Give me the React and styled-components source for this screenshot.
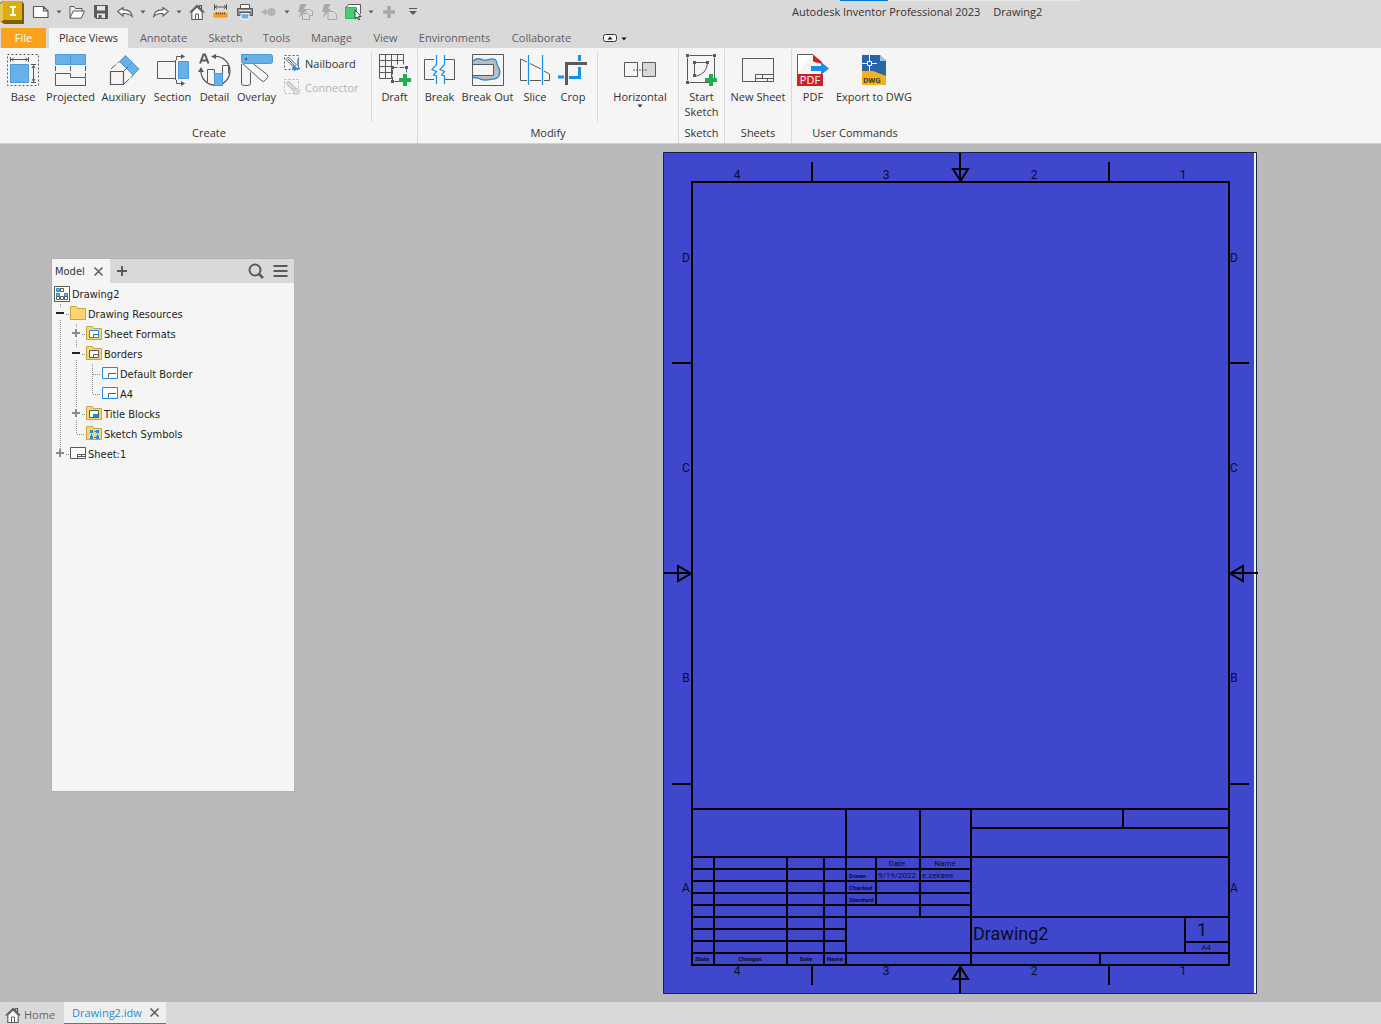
import React, { useState } from "react";
import styled, { createGlobalStyle, css } from "styled-components";

const ui = `"Open Sans", "Noto Sans", sans-serif`;
const treeFont = `"DejaVu Sans Condensed", "DejaVu Sans", sans-serif`;
const cadFont = `"Roboto", "Liberation Sans", sans-serif`;
const ink = "#5a5a5a";
const sky = "#68b0e6";
const azure = "#1a8fe3";

const GlobalStyle = createGlobalStyle`
  * { box-sizing: border-box; }
  body { margin: 0; background: #bababa; font-family: ${ui}; font-size: 11px; color: #333; }
  button { font: inherit; color: inherit; border: 0; padding: 0; margin: 0; background: none; cursor: default; }
  svg { display: block; flex: none; }
`;

const Shell = styled.div`
  display: flex;
  flex-direction: column;
  min-height: 100vh;
`;

/* ---------- title bar ---------- */
const TitleBar = styled.header`
  position: relative;
  display: flex;
  align-items: center;
  height: 28px;
  padding-bottom: 5px;
  background: #d9d9d9;
  white-space: nowrap;
`;
const EdgeMark = styled.span`
  position: absolute;
  top: 0;
  left: 840px;
  width: 240px;
  height: 1px;
  background: linear-gradient(to right, #0078d7 48px, #e6e6e6 48px);
`;
const Logo = styled.div`
  width: 29px;
`;
const QuickButton = styled.button`
  display: flex;
  align-items: center;
  justify-content: center;
  width: ${(p) => (p.$narrow ? 12 : 24)}px;
  height: 22px;
`;
const TitleText = styled.h1`
  display: flex;
  gap: 13px;
  margin: 0 0 0 367px;
  font-size: 11px;
  font-weight: 400;
  line-height: 16px;
`;

/* ---------- tabs ---------- */
const TabBar = styled.nav`
  display: flex;
  height: 20px;
  padding-left: 1px;
  background: #d9d9d9;
`;
const Tab = styled.button`
  width: ${(p) => p.$w}px;
  height: 20px;
  line-height: 20px;
  white-space: nowrap;
  text-align: center;
  && { color: #5f5f5f; }
  ${(p) => p.$kind === "file" && css`&& { background: #faa21b; color: #fff; margin-right: 3px; }`}
  ${(p) => p.$kind === "active" && css`&& { background: #f5f5f5; color: #333; margin-right: 1px; }`}
`;
const RibbonToggle = styled.button`
  display: flex;
  align-items: center;
  && { margin-left: 20px; }
`;

/* ---------- ribbon ---------- */
const Ribbon = styled.div`
  display: flex;
  height: 96px;
  padding-left: 1px;
  background: #f5f5f5;
  border-top: 1px solid #f5f5f5;
  border-bottom: 1px solid #d0d0d0;
`;
const Group = styled.section`
  display: flex;
  flex-direction: column;
  width: ${(p) => p.$w}px;
  border-right: ${(p) => (p.$last ? 0 : 1)}px solid #d9d9d9;
`;
const GroupTools = styled.div`
  display: flex;
  flex: 1;
`;
const GroupName = styled.h2`
  margin: 0;
  height: 20px;
  font-size: 11px;
  font-weight: 400;
  line-height: 20px;
  text-align: center;
  white-space: nowrap;
`;
const Tool = styled.button`
  display: flex;
  flex-direction: column;
  align-items: center;
  width: ${(p) => p.$w}px;
  height: 72px;
  && { padding-top: 5px; }
`;
const ToolLabel = styled.span`
  margin-top: 3px;
  line-height: 15px;
  text-align: center;
  white-space: pre;
`;
const ToolStack = styled.div`
  display: flex;
  flex-direction: column;
  width: 93px;
  padding-left: 6px;
  padding-top: 2px;
`;
const SmallTool = styled.button`
  display: flex;
  align-items: center;
  gap: 5px;
  height: 24px;
  &:disabled { color: #b4b4b4; }
`;
const Divider = styled.span`
  width: 1px;
  height: 71px;
  margin: 2px ${(p) => p.$gap}px 0;
  background: #d9d9d9;
`;

/* ---------- workspace ---------- */
const Workspace = styled.main`
  position: relative;
  display: flex;
  flex: 1;
  align-items: flex-start;
  justify-content: flex-end;
  padding: 8px 123px 8px 0;
  background: #bababa;
`;
const ModelPanel = styled.aside`
  position: absolute;
  left: 52px;
  top: 115px;
  width: 242px;
  height: 532px;
  background: #f5f5f5;
  box-shadow: 0 0 0 1px #b2b2b2;
  font-family: ${treeFont};
  font-size: 11px;
  color: #1e1e1e;
`;
const PanelHead = styled.div`
  display: flex;
  align-items: center;
  height: 24px;
  padding-right: 6px;
  background: #d9d9d9;
`;
const PanelTab = styled.div`
  display: flex;
  align-items: center;
  justify-content: space-between;
  width: 58px;
  height: 24px;
  padding: 0 7px 0 3px;
  background: #f5f5f5;
  color: #33334d;
`;
const PanelActions = styled.div`
  display: flex;
  gap: 9px;
  margin-left: auto;
`;
const PanelButton = styled.button`
  display: flex;
  ${(p) => p.$indent && css`&& { margin-left: 6px; }`}
`;
const Tree = styled.ul`
  list-style: none;
  margin: 0;
  padding: 1px 0 0;
`;
const TreeRow = styled.li`
  display: flex;
  align-items: center;
  height: 20px;
  white-space: nowrap;
`;
const TreeItem = styled.button`
  display: flex;
  align-items: center;
  gap: 2px;
  && { margin-left: 2px; }
`;
const Guide = styled.svg`
  overflow: visible;
`;
const Sheet = styled.svg`
  overflow: visible;
  font-family: ${cadFont};
`;

/* ---------- document tabs ---------- */
const DocBar = styled.footer`
  display: flex;
  height: 22px;
  background: #d9d9d9;
`;
const HomeButton = styled.button`
  display: flex;
  align-items: center;
  gap: 3px;
  width: 64px;
  height: 22px;
  && { padding: 3px 0 0 5px; color: #666; }
`;
const DocTab = styled.div`
  display: flex;
  align-items: center;
  justify-content: space-between;
  width: 102px;
  padding: 0 7px 0 8px;
  background: #efefef;
  border-bottom: 1px solid #1a8fd0;
  color: #1a8fd0;
`;

/* ---------- quick access icons ---------- */
const Svg = ({ w = 16, h = 16, children }) => (
  <svg width={w} height={h} viewBox={`0 0 ${w} ${h}`} fill="none" stroke={ink} overflow="visible" aria-hidden="true">
    {children}
  </svg>
);
const Caret = ({ color = ink }) => (
  <Svg w={6} h={4}><path d="M0.500 0.500h5l-2.500 3z" fill={color} stroke="none" /></Svg>
);
const AppLogo = () => (
  <Svg w={24} h={24}>
    <path d="M0 3L3 1h19l2 3v20H4L0 21z" fill="#7b5f00" stroke="none" />
    <path d="M0 4L4 1v19l-4 2z" fill="#e8c65a" stroke="none" />
    <path d="M3 1h19v19H3z" fill="#dcae0b" stroke="none" />
    <path d="M10 7h6M10 15h6M13 6v10" stroke="#fff" strokeWidth="2" />
  </Svg>
);
const HomeIcon = () => (
  <Svg>
    <path d="M0.800 8.500L8 1.300L15.200 8.500M12.500 5.500V1.500h-2V3.500" strokeWidth="1.200" />
    <path d="M2.800 8V15.500h10.400V8L8 2.800z" fill="#fff" strokeWidth="1.100" />
    <path d="M6.500 15V10h3v5" fill="#fff" />
  </Svg>
);
const Arrow = ({ flip }) => (
  <Svg>
    <path
      transform={flip ? "translate(16 0) scale(-1 1)" : undefined}
      d="M0.700 7.500L6 3.500V6C11 5.500 14.500 8 15.300 12.500C12.500 9.800 10 9.300 6 9.500V12z"
      fill="#fff" strokeWidth="1.100"
    />
  </Svg>
);
const BoltIcon = ({ two }) => (
  <Svg>
    <path d="M3.500 0h6L7 5h3L1.500 14L4 8H1z" fill="#a8a8a8" stroke="none" />
    {two && <path d="M8.500 5.500h5l2 2v4h-7z" fill="#d9d9d9" stroke="#a8a8a8" />}
    <path d={two ? "M5.500 9.500h5l2 2v4h-7z" : "M7 7.500h5.500l3 3v5H7z"} fill="#d9d9d9" stroke="#a8a8a8" />
  </Svg>
);
const quick = {
  new: <Svg w={18}><path d="M1.500 2.500h10l4.500 4.500v6.500h-14.500zM11.500 2.500V7H16" fill="#fff" strokeWidth="1.200" /></Svg>,
  open: <Svg><path d="M1 14V2.500h4l1.500 2H13V7" fill="#efefef" /><path d="M1 14.200L4.200 7h11.300l-3.200 7.200z" fill="#fff" /></Svg>,
  save: (
    <Svg w={14} h={14}>
      <path d="M0.500 0.500h13v13H2L0.500 12z" fill="#5a5a5a" />
      <path d="M3 1h8v4.500h-8z" fill="#e4e4e4" stroke="none" />
      <path d="M3 8.500h8V13H3z" fill="#e4e4e4" stroke="none" />
      <path d="M4.500 10h3v3h-3z" fill={ink} stroke="none" />
    </Svg>
  ),
  undo: <Arrow />,
  redo: <Arrow flip />,
  home: <HomeIcon />,
  measure: (
    <Svg>
      <path d="M1.500 0v6M13.500 0v6M2 3h11" /><path d="M4 1.200L2 3l2 1.800M11 1.200L13 3l-2 1.800" />
      <path d="M1 9h13v4h-13z" fill="#f9a11b" stroke="#ee9512" />
      <path d="M3.500 8.500v2M5.500 8.500v2M7.500 8.500v2M9.500 8.500v2M11.500 8.500v2" stroke="#7a4b00" />
    </Svg>
  ),
  print: (
    <Svg>
      <path d="M3.500 0.500h9v5h-9z" fill="#fff" />
      <path d="M0.500 4.500h15v7H0.500z" fill="#8b8b8b" />
      <path d="M2 6.500h12" stroke="#e4e4e4" />
      <path d="M4 9.500h8v5.500h-8z" fill={sky} stroke="#fff" /><path d="M3 8.500h10" />
    </Svg>
  ),
  back: <Svg><path d="M0 8l5-3.500V7h4v2.500H5v2z" fill="#b4b4b4" stroke="none" /><circle cx="10.500" cy="8" r="4" fill="#b4b4b4" stroke="none" /></Svg>,
  boltTwo: <BoltIcon two />,
  bolt: <BoltIcon />,
  cube: (
    <Svg w={16} h={16}>
      <path d="M0.500 3.500L4 0.500h11.500v9L12 13.500z" fill="#fff" />
      <path d="M0.500 3.500h11v11h-11z" fill="#4fc878" stroke="#3fae64" />
      <path d="M10 6v8.500l2-1.500l1.500 3l1.200-.600L13.300 12.500H16z" fill="#fff" strokeWidth="0.900" stroke="#333" />
    </Svg>
  ),
  plus: <Svg><path d="M8 2v12M2 8h12" stroke="#a8a8a8" strokeWidth="3.500" /></Svg>,
  more: <Svg w={8} h={8}><path d="M0 0.500h8" /><path d="M0 3h8L4 7z" fill={ink} stroke="none" /></Svg>,
};

const quickItems = [
  ["new", "New"], ["caret", "New options"], ["open", "Open"], ["save", "Save"],
  ["undo", "Undo"], ["caret", "Undo history"], ["redo", "Redo"], ["caret", "Redo history"],
  ["home", "Home"], ["measure", "Measure"], ["print", "Print"], ["back", "Return"],
  ["caret", "Return options"], ["boltTwo", "Update all"], ["bolt", "Update"],
  ["cube", "Select"], ["caret", "Select options"], ["plus", "Add"], ["more", "Customize"],
];

/* ---------- ribbon icons ---------- */
const Plus = ({ x, y }) => (
  <path d={`M${x} ${y - 6}v12M${x - 6} ${y}h12`} stroke="#23ad4f" strokeWidth="4" />
);
const Dots = ({ pts, fill = ink, s = 3 }) =>
  pts.map(([x, y]) => <rect key={`${x}-${y}`} x={x} y={y} width={s} height={s} fill={fill} stroke="none" />);

const icons = {
  base: (
    <Svg w={32} h={32}>
      <path d="M0.500 0.500h31v31h-31z" strokeDasharray="2 2" />
      <path d="M3.500 10.500h18v18h-18z" fill={sky} stroke="#4d9bd6" />
      <path d="M3.500 3v5M21.500 3v5M4 5.500h17M6.500 4L4.500 5.500l2 1.500M18.500 4l2 1.500l-2 1.500M24 10.500h5M24 28.500h5M26.500 11v17M25 14l1.500-2.500L28 14M25 25l1.500 2.500L28 25" />
    </Svg>
  ),
  projected: (
    <Svg w={32} h={32}>
      <path d="M0.500 0.500h30v10h-30zM15.500 0.500v10" fill={sky} stroke="#4d9bd6" />
      <path d="M0.500 12v6M15.500 12v6M30.500 12v11" strokeDasharray="5 2" />
      <path d="M0.500 19.500h15v4h15v8h-30z" />
    </Svg>
  ),
  auxiliary: (
    <Svg w={32} h={32}>
      <path d="M17.500 1.500L31 15L25 21L11.500 7.500z" fill={sky} stroke="#4d9bd6" /><path d="M24.500 8l-6 6" stroke="#4d9bd6" />
      <path d="M2.500 17.500h13v13h-13z" strokeWidth="1.200" />
      <path d="M3 15L11.500 7.500M16 30L25.500 21M16 17l4-4" strokeDasharray="7 2" />
    </Svg>
  ),
  section: (
    <Svg w={32} h={32}>
      <path d="M18 7.500H0.500v17H18" /><path d="M21.500 7.500h10v17h-10z" fill={sky} stroke="#4d9bd6" />
      <path d="M18.500 6v20M19.500 26V29.500H25M19.500 6V2.500H25" />
      <path d="M24 0l4 2.500L24 5zM24 27l4 2.500L24 32z" fill={ink} stroke="none" />
    </Svg>
  ),
  detail: (
    <Svg w={32} h={32}>
      <path d="M15 2.500A14.500 14.500 0 1 1 2 16" strokeWidth="1.300" />
      <path d="M8.500 29V15.500h7v15M23.500 30.500V11.500h6v8" />
      <path d="M15.500 19.500h8v12h-8z" fill={sky} stroke="#4d9bd6" />
      <path d="M17 0v5l-5-2.500zM-1 18l3-5l3 5z" fill={ink} stroke="none" />
      <path d="M1 9.500L4.500 0.500H6L9.500 9.500M2.500 6.500h5.500" strokeWidth="2" />
    </Svg>
  ),
  overlay: (
    <Svg w={32} h={32}>
      <path d="M0.500 10v19q0 2.500 2.500 2.500h4q2.500 0 2.500-2.500V18.500" />
      <path d="M2 10L21 27q1.500 1 3-.5l2.500-3q1-1.500-.5-3L12.500 10" />
      <path d="M0.500 0.500H29.500q2 0 2 2v5q0 2-2 2H2.500q-2 0-2-2z" fill={sky} stroke="#4d9bd6" />
      <circle cx="5" cy="5" r="1.200" fill={ink} stroke="none" />
    </Svg>
  ),
  draft: (
    <Svg w={32} h={32}>
      <path d="M0.500 0.500h24M0.500 0.500v24M6.500 0.500v24M12.500 0.500v24M18.500 0.500v10M24.500 0.500v10M0.500 6.500h24M0.500 12.500h12M0.500 18.500h12M0.500 24.500h12" />
      <path d="M13.500 13.500h14v14h-14z" fill="#f5f5f5" strokeDasharray="5 2" />
      <Dots pts={[[12, 12], [26, 12], [12, 26]]} />
      <Plus x={26} y={26} />
    </Svg>
  ),
  break: (
    <Svg w={32} h={32}>
      <path d="M10 5.500H0.500v20H10M21 5.500h9.500v20H21" />
      <path d="M12.500 1v9.500L8 15.500l4.500 2L9.500 21l3 1v8M20.500 1v9.500L16 15.500l4.500 2L17.500 21l3 1v8" stroke={azure} strokeWidth="1.200" />
    </Svg>
  ),
  breakOut: (
    <Svg w={32} h={32}>
      <path d="M0.500 0.500h31v31h-31z" />
      <path d="M1 7C4 4 8 4.500 11 6C16 7 18 3.500 23 5.500C26 8 24 11 27 14C29 20 27 25 21 25C15 26 10 27 6 24H1V22h20V10.500H1z" fill="#bdbdbd" stroke="none" />
      <path d="M1 7C4 4 8 4.500 11 6C16 7 18 3.500 23 5.500C26 8 24 11 27 14C29 20 27 25 21 25C15 26 10 27 6 24L1 23.500" stroke={azure} strokeWidth="1.300" />
      <path d="M1 10.500h20.500v11H1" fill="#f5f5f5" />
    </Svg>
  ),
  slice: (
    <Svg w={32} h={32}>
      <path d="M8 8L1.500 5v21.500H8M11 9.500l11 5.500M11 26.500h11M25 17l5.500 3v6.500H25" />
      <path d="M9.500 1v30M23.500 1v30" stroke={azure} strokeWidth="1.200" />
    </Svg>
  ),
  crop: (
    <Svg w={32} h={32}>
      <path d="M22.500 1v6M22.500 13v10.500H12M7 23H1" stroke={azure} strokeWidth="3" />
      <path d="M9.500 31V9.500H30" strokeWidth="3" />
    </Svg>
  ),
  horizontal: (
    <Svg w={32} h={32}>
      <path d="M0.500 8.500h13v14h-13z" /><path d="M18.500 8.500h13v14h-13z" fill="#d9d9d9" />
      <path d="M9 16h14" strokeDasharray="2 1" />
    </Svg>
  ),
  sketch: (
    <Svg w={32} h={32}>
      <path d="M1.500 1.500h27v27h-27z" strokeDasharray="23 4" strokeDashoffset="-2" />
      <path d="M8.500 22V8.500h13M21.500 9Q21 20 9 22.500" />
      <Dots pts={[[0, 0], [27, 0], [0, 27], [7, 7], [20, 7], [7, 20]]} />
      <Plus x={25} y={26} />
    </Svg>
  ),
  newSheet: (
    <Svg w={32} h={32}>
      <path d="M0.500 4.500h31v23h-31zM13.500 27.500v-7h18M13.500 24.500h18M20.500 20.500v4M25.500 24.500v3" />
    </Svg>
  ),
  pdf: (
    <Svg w={32} h={32}>
      <path d="M0.500 20V0.500H16" fill="#fff" /><path d="M16 0.500v7l9 2.500V8z" fill="#cc2229" stroke="none" />
      <path d="M14 12h10V8l8 6.500L24 21v-4H14z" fill="#1a8fe3" stroke="none" />
      <path d="M0 20h26v12H0z" fill="#cc2229" stroke="none" />
      <text x="13" y="30" fill="#fff" stroke="none" fontSize="11" textAnchor="middle" fontFamily={ui}>PDF</text>
    </Svg>
  ),
  dwg: (
    <Svg w={32} h={32}>
      <path d="M4 1h18l6 6v18H4z" fill="#2d64a7" stroke="none" /><path d="M22 1l6 6h-6z" fill="#a6c3e6" stroke="none" />
      <path d="M4 17h11l13 5v9H4z" fill="#f6b21b" stroke="none" />
      <path d="M11.500 1v6M11.500 12v5M4 9.500h5M14 9.500h5M9.500 7.500h4v4h-4z" stroke="#fff" />
      <text x="14" y="29" fill="#3c3c3c" stroke="none" fontSize="8" fontWeight="700" textAnchor="middle" fontFamily={cadFont}>DWG</text>
    </Svg>
  ),
};

const NailIcon = ({ off }) => {
  const c = off ? "#b4b4b4" : ink;
  return (
    <Svg>
      <path d="M0.500 0.500h14v14h-14z" stroke={c} strokeDasharray="2 2" />
      <path d="M2 4.500L4.500 2L12 9.500L9.500 12z" stroke={c} fill={off ? "#d9d9d9" : "#fff"} />
      {off ? (
        <><circle cx="12.500" cy="12.500" r="3" stroke={c} fill="#f5f5f5" /><circle cx="12.500" cy="12.500" r="1" stroke={c} /></>
      ) : (
        <><path d="M4 4l6 6" stroke={ink} /><path d="M8 8l3 4" stroke="#c04fc0" /><path d="M11 13.500h5M14 4v7" stroke={azure} strokeWidth="1.500" /><circle cx="10.500" cy="13.500" r="2.200" fill={azure} stroke="none" /></>
      )}
    </Svg>
  );
};

/* ---------- tree ---------- */
const Folder = ({ children }) => (
  <Svg>
    <path d="M0.500 13.500V0.500h6l1 2h8v11z" fill="#f9d671" stroke="#caa24b" />
    {children}
  </Svg>
);
const MiniSheet = ({ stroke }) => (
  <>
    <path d="M3.500 4.500h9v7h-9z" fill="#fff" stroke={stroke} />
    <path d="M7.500 11.500v-3h4.500" />
  </>
);
const treeIcons = {
  drawing: (
    <Svg>
      <path d="M0.500 0.500h15v15H0.500z" fill="#fff" />
      <path d="M2.500 2.500h3v3h-3zM10.500 7.500h3v3h-3zM2.500 7.500h3v3h-3z" fill={sky} stroke={azure} />
      <path d="M6.500 2.500h3v3h-3zM2.500 10.500h3v3h-3zM6.500 10.500h3v3h-3zM10.500 10.500h3v3h-3z" />
    </Svg>
  ),
  folder: <Folder />,
  formats: <Folder><MiniSheet stroke={azure} /></Folder>,
  borders: <Folder><MiniSheet stroke={ink} /></Folder>,
  border: <Svg><path d="M0.500 1.500h15v11H0.500z" fill="#fff" stroke={azure} /><path d="M6.500 11.500v-4H14" /></Svg>,
  titles: <Folder><path d="M3.500 4.500h9v7h-9z" fill="#fff" /><path d="M7 8h5v3h-5z" fill={azure} stroke="none" /></Folder>,
  symbols: (
    <Folder>
      <path d="M5 5.500h6M5 11.500h6M5.500 5v6M11.500 5v6" stroke={azure} strokeDasharray="2 1" />
      <Dots fill={azure} pts={[[4, 4], [10, 4], [4, 10], [10, 10]]} />
    </Folder>
  ),
  sheet: <Svg><path d="M0.500 1.500h15v11H0.500z" fill="#fff" /><path d="M7.500 12.500v-4H15M8 10.500h7M11.500 8.500v2" /></Svg>,
};

const TreeGuide = ({ kind }) => {
  const dot = { stroke: "#8a8a8a", strokeDasharray: "1 1" };
  if (kind === "line") return <Guide width="16" height="20"><path d="M8.500 0v20" {...dot} /></Guide>;
  if (kind === "tee" || kind === "elbow")
    return (
      <Guide width="16" height="20">
        <path d={kind === "tee" ? "M8.500 0v20" : "M8.500 0v10"} {...dot} fill="none" /><path d="M9 10.500h8" {...dot} />
      </Guide>
    );
  const open = kind.startsWith("minus");
  return (
    <Guide width="16" height="20">
      <path d={kind.endsWith("End") ? "M8.500 0v5" : "M8.500 0v4M8.500 16v4"} {...dot} />
      <path d="M14 10.500h4" {...dot} />
      <path d={open ? "M4 9h8" : "M4 9h8M8 5v8"} stroke={open ? "#222" : "#8a8a8a"} strokeWidth="2" />
    </Guide>
  );
};

const treeRows = [
  { label: "Drawing2", icon: "drawing", guides: [] },
  { label: "Drawing Resources", icon: "folder", guides: ["minus"] },
  { label: "Sheet Formats", icon: "formats", guides: ["line", "plus"] },
  { label: "Borders", icon: "borders", guides: ["line", "minus"] },
  { label: "Default Border", icon: "border", guides: ["line", "line", "tee"] },
  { label: "A4", icon: "border", guides: ["line", "line", "elbow"] },
  { label: "Title Blocks", icon: "titles", guides: ["line", "plus"] },
  { label: "Sketch Symbols", icon: "symbols", guides: ["line", "elbow"] },
  { label: "Sheet:1", icon: "sheet", guides: ["plusEnd"] },
];

/* ---------- sheet drawing ---------- */
// [from, to, position] for each rule of the title block
const rows = [
  [29, 566, 657], [29, 566, 705], [29, 308, 717], [29, 308, 729], [29, 308, 741],
  [29, 308, 753], [29, 566, 765], [29, 183, 777], [29, 183, 789], [29, 566, 801],
  [308, 566, 676], [522, 566, 790],
  [9, 29, 211], [9, 29, 632], [566, 586, 211], [566, 586, 632], [1, 29, 421], [566, 595, 421],
];
const cols = [
  [705, 813, 51], [705, 813, 124], [705, 813, 161], [657, 813, 183], [705, 753, 213],
  [657, 765, 257], [657, 813, 308], [657, 676, 460], [765, 801, 522], [801, 813, 437],
  [10, 30, 149], [10, 30, 446], [813, 833, 149], [813, 833, 446], [1, 30, 297], [813, 841, 297],
];
// [text, x, baseline, size, anchor, weight]
const notes = [
  ["Date", 234, 714, 8], ["Name", 282, 714, 8],
  ["Drawn", 186, 726, 6, "start", 700], ["9/19/2022", 215, 726, 8, "start"], ["e.zekaee", 259, 726, 8, "start"],
  ["Checked", 186, 738, 6, "start", 700], ["Standard", 186, 750, 6, "start", 700],
  ["State", 39, 809, 6, "middle", 700], ["Changes", 87, 809, 6, "middle", 700],
  ["Date", 143, 809, 6, "middle", 700], ["Name", 172, 809, 6, "middle", 700],
  ["Drawing2", 310, 788, 18, "start"], ["1", 539, 784, 18], ["A4", 543, 798, 8],
];
const zonesX = [["4", 74], ["3", 223], ["2", 371], ["1", 520]];
const zonesY = [["D", 110], ["C", 320], ["B", 530], ["A", 740]];

const DrawingSheet = () => (
  <Sheet width="595" height="842" viewBox="0 0 595 842" role="img" aria-label="Drawing2 sheet">
    <path d="M0.500 0.500h593v841H0.500z" fill="#3f48cc" stroke="#1d2148" />
    <path d="M592 1v840" stroke="#f2f2e6" strokeWidth="2" />
    <g stroke="#000" strokeWidth="2" fill="none">
      <path d="M29 30H566V813H29z" />
      {rows.map(([a, b, y]) => <path key={`r${a}-${y}`} d={`M${a} ${y}H${b}`} />)}
      {cols.map(([a, b, x]) => <path key={`c${a}-${x}`} d={`M${x} ${a}V${b}`} />)}
      <path d="M290 17h15l-7.500 12zM290 827h15l-7.500-12zM15 414v15l13-7.500zM580 414v15l-13-7.500z" />
    </g>
    <g fill="#0b0c2a">
      {zonesX.map(([t, x]) => (
        <React.Fragment key={t}>
          <text x={x} y={27} fontSize="12" textAnchor="middle">{t}</text>
          <text x={x} y={823} fontSize="12" textAnchor="middle">{t}</text>
        </React.Fragment>
      ))}
      {zonesY.map(([t, y]) => (
        <React.Fragment key={t}>
          <text x={23} y={y} fontSize="12" textAnchor="middle">{t}</text>
          <text x={571} y={y} fontSize="12" textAnchor="middle">{t}</text>
        </React.Fragment>
      ))}
      {notes.map(([t, x, y, size, anchor = "middle", weight = 400]) => (
        <text key={`${t}${x}`} x={x} y={y} fontSize={size} textAnchor={anchor} fontWeight={weight}>{t}</text>
      ))}
    </g>
  </Sheet>
);

const tabs = [
  ["File", 45, "file"], ["Place Views", 79, "active"], ["Annotate", 69], ["Sketch", 55], ["Tools", 47],
  ["Manage", 63], ["View", 45], ["Environments", 93], ["Collaborate", 81],
];

const RibbonTool = ({ icon, label, w, menu }) => (
  <Tool $w={w}>
    {icons[icon]}
    <ToolLabel>{label}</ToolLabel>
    {menu && <Caret color="#333" />}
  </Tool>
);

const Cross = ({ s = 9 }) => (
  <Svg w={s} h={s}><path d={`M0.500 0.500L${s - 0.5} ${s - 0.5}M${s - 0.5} 0.500L0.500 ${s - 0.5}`} strokeWidth="1.500" /></Svg>
);

export default function App() {
  const [active, setActive] = useState("Place Views");
  return (
    <Shell>
      <GlobalStyle />
      <TitleBar>
        <EdgeMark />
        <Logo><AppLogo /></Logo>
        {quickItems.map(([icon, label]) => (
          <QuickButton key={label} aria-label={label} $narrow={icon === "caret"}>
            {icon === "caret" ? <Caret /> : quick[icon]}
          </QuickButton>
        ))}
        <TitleText><span>Autodesk Inventor Professional 2023</span><span>Drawing2</span></TitleText>
      </TitleBar>

      <TabBar>
        {tabs.map(([name, w, kind]) => (
          <Tab
            key={name}
            $w={w}
            $kind={kind}
            aria-current={name === active ? "page" : undefined}
            onClick={() => setActive(name)}
          >
            {name}
          </Tab>
        ))}
        <RibbonToggle aria-label="Minimize ribbon">
          <Svg w={26} h={12}>
            <path d="M3.500 2.500h9q2 0 2 2v3q0 2-2 2h-9q-2 0-2-2v-3q0-2 2-2z" fill="#f5f5f5" stroke="#333" />
            <path d="M5.500 7.500L8 4.500l2.500 3zM19.500 5.500h5l-2.500 3z" fill="#111" stroke="none" />
          </Svg>
        </RibbonToggle>
      </TabBar>

      <Ribbon>
        <Group $w={417}>
          <GroupTools>
            <RibbonTool icon="base" label="Base" w={44} />
            <RibbonTool icon="projected" label="Projected" w={51} />
            <RibbonTool icon="auxiliary" label="Auxiliary" w={55} />
            <RibbonTool icon="section" label="Section" w={43} />
            <RibbonTool icon="detail" label="Detail" w={41} />
            <RibbonTool icon="overlay" label="Overlay" w={43} />
            <ToolStack>
              <SmallTool><NailIcon />Nailboard</SmallTool>
              <SmallTool disabled><NailIcon off />Connector</SmallTool>
            </ToolStack>
            <Divider $gap={0} />
            <RibbonTool icon="draft" label="Draft" w={45} />
          </GroupTools>
          <GroupName>Create</GroupName>
        </Group>
        <Group $w={261}>
          <GroupTools>
            <RibbonTool icon="break" label="Break" w={43} />
            <RibbonTool icon="breakOut" label="Break Out" w={53} />
            <RibbonTool icon="slice" label="Slice" w={42} />
            <RibbonTool icon="crop" label="Crop" w={34} />
            <Divider $gap={7} />
            <RibbonTool icon="horizontal" label="Horizontal" w={70} menu />
          </GroupTools>
          <GroupName>Modify</GroupName>
        </Group>
        <Group $w={46}>
          <GroupTools><RibbonTool icon="sketch" label={"Start\nSketch"} w={45} /></GroupTools>
          <GroupName>Sketch</GroupName>
        </Group>
        <Group $w={67}>
          <GroupTools><RibbonTool icon="newSheet" label="New Sheet" w={66} /></GroupTools>
          <GroupName>Sheets</GroupName>
        </Group>
        <Group $w={126} $last>
          <GroupTools>
            <RibbonTool icon="pdf" label="PDF" w={42} />
            <RibbonTool icon="dwg" label="Export to DWG" w={80} />
          </GroupTools>
          <GroupName>User Commands</GroupName>
        </Group>
      </Ribbon>

      <Workspace>
        <ModelPanel>
          <PanelHead>
            <PanelTab>Model<PanelButton aria-label="Close panel"><Cross /></PanelButton></PanelTab>
            <PanelButton $indent aria-label="Add panel">
              <Svg w={12} h={12}><path d="M6 1v10M1 6h10" strokeWidth="2" /></Svg>
            </PanelButton>
            <PanelActions>
              <PanelButton aria-label="Search">
                <Svg><circle cx="7" cy="7" r="5.500" strokeWidth="2" /><path d="M11 11l4 4" strokeWidth="2.500" /></Svg>
              </PanelButton>
              <PanelButton aria-label="Panel menu">
                <Svg w={15}><path d="M0.500 3h14M0.500 8h14M0.500 13h14" strokeWidth="2" /></Svg>
              </PanelButton>
            </PanelActions>
          </PanelHead>
          <Tree>
            {treeRows.map((row) => (
              <TreeRow key={row.label}>
                {row.guides.map((kind, i) => <TreeGuide key={i} kind={kind} />)}
                <TreeItem>{treeIcons[row.icon]}{row.label}</TreeItem>
              </TreeRow>
            ))}
          </Tree>
        </ModelPanel>
        <DrawingSheet />
      </Workspace>

      <DocBar>
        <HomeButton><HomeIcon />Home</HomeButton>
        <DocTab>Drawing2.idw<PanelButton aria-label="Close Drawing2.idw"><Cross /></PanelButton></DocTab>
      </DocBar>
    </Shell>
  );
}
